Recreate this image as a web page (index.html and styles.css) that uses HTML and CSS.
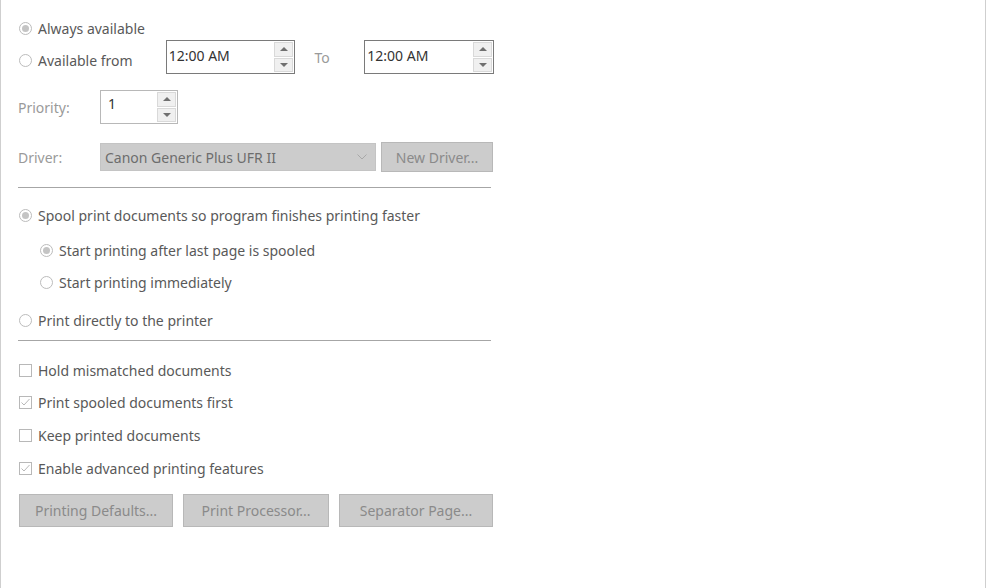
FILE: index.html
```html
<!DOCTYPE html>
<html>
<head>
<meta charset="utf-8">
<link rel="stylesheet" href="styles.css">
</head>
<body>
<div class="panel">
  <div class="content">
    <div class="row r-always">
      <span class="radio checked"></span><span class="label">Always available</span>
    </div>
    <div class="row r-from">
      <span class="radio low"></span><span class="label from-label low">Available from</span>
      <div class="spin time">
        <span class="value">12:00 AM</span>
        <div class="arrows"><span class="arrow up"></span><span class="arrow down"></span></div>
      </div>
      <span class="dim to-label">To</span>
      <div class="spin time">
        <span class="value">12:00 AM</span>
        <div class="arrows"><span class="arrow up"></span><span class="arrow down"></span></div>
      </div>
    </div>
    <div class="row r-priority">
      <span class="dim field-label">Priority:</span>
      <div class="spin priority">
        <span class="value prio-value">1</span>
        <div class="arrows"><span class="arrow up"></span><span class="arrow down"></span></div>
      </div>
    </div>
    <div class="row r-driver">
      <span class="dim field-label">Driver:</span>
      <div class="select">
        <span class="select-text">Canon Generic Plus UFR II</span>
        <svg class="chev" width="10" height="6" viewBox="0 0 10 6"><path d="M0.5 0.5 L5 5 L9.5 0.5" fill="none" stroke="#a8a8a8" stroke-width="1"/></svg>
      </div>
      <div class="btn new-driver">New Driver...</div>
    </div>
    <div class="rule rule-1"></div>
    <div class="row r-spool">
      <span class="radio checked"></span><span class="label">Spool print documents so program finishes printing faster</span>
    </div>
    <div class="row sub r-sub1">
      <span class="radio checked"></span><span class="label">Start printing after last page is spooled</span>
    </div>
    <div class="row sub r-sub2">
      <span class="radio"></span><span class="label">Start printing immediately</span>
    </div>
    <div class="row r-direct">
      <span class="radio"></span><span class="label">Print directly to the printer</span>
    </div>
    <div class="rule rule-2"></div>
    <div class="row r-cb1">
      <span class="check"></span><span class="label">Hold mismatched documents</span>
    </div>
    <div class="row r-cb2">
      <span class="check"><svg width="11" height="11" viewBox="0 0 11 11"><path d="M1.5 5.5 L4 8 L9.5 2" fill="none" stroke="#b8b8b8" stroke-width="1"/></svg></span><span class="label">Print spooled documents first</span>
    </div>
    <div class="row r-cb3">
      <span class="check"></span><span class="label">Keep printed documents</span>
    </div>
    <div class="row r-cb4">
      <span class="check"><svg width="11" height="11" viewBox="0 0 11 11"><path d="M1.5 5.5 L4 8 L9.5 2" fill="none" stroke="#b8b8b8" stroke-width="1"/></svg></span><span class="label">Enable advanced printing features</span>
    </div>
    <div class="buttons">
      <div class="btn b-defaults">Printing Defaults...</div>
      <div class="btn b-proc">Print Processor...</div>
      <div class="btn b-sep">Separator Page...</div>
    </div>
  </div>
</div>
</body>
</html>
```
FILE: styles.css
```css
html, body {
  margin: 0;
  padding: 0;
  background: #ffffff;
}
body {
  font-family: "Noto Sans", "Open Sans", sans-serif;
  font-size: 14px;
  color: #595959;
}
.panel {
  box-sizing: border-box;
  width: 986px;
  height: 588px;
  border-left: 1px solid #cfcfcf;
  border-right: 1px solid #cfcfcf;
  padding: 18px 0 0 17px;
}
.content {
  width: 476px;
  display: flex;
  flex-direction: column;
}
.row {
  display: flex;
  align-items: center;
  height: 20px;
}
.sub { padding-left: 21px; }
.radio {
  box-sizing: border-box;
  width: 13px;
  height: 13px;
  border: 1px solid #bcbcbc;
  border-radius: 50%;
  margin-left: 1px;
  margin-right: 6px;
  flex: none;
  display: flex;
  align-items: center;
  justify-content: center;
}
.radio.checked::after {
  content: "";
  width: 7px;
  height: 7px;
  border-radius: 50%;
  background: #c4c4c4;
}
.check {
  box-sizing: border-box;
  width: 13px;
  height: 13px;
  border: 1px solid #b8b8b8;
  margin-left: 1px;
  margin-right: 6px;
  flex: none;
  display: flex;
  align-items: center;
  justify-content: center;
}
.check svg { display: block; }
.label { white-space: nowrap; }
.low { margin-top: 6px; }
.dim { color: #9a9a9a; }
.r-from { height: 34px; margin-top: 2px; }
.from-label { width: 128px; }
.to-label { width: 50px; margin-left: 19px; }
.field-label { width: 82px; }
.spin {
  box-sizing: border-box;
  display: flex;
  align-items: stretch;
  justify-content: space-between;
  height: 34px;
  background: #fff;
  padding: 1px;
}
.time {
  width: 130px;
  border: 1px solid #7a7a7a;
}
.priority {
  width: 78px;
  border: 1px solid #b8b8b8;
}
.value {
  color: #333333;
  padding-left: 1px;
  align-self: center;
  margin-top: -3px;
}
.prio-value {
  align-self: flex-start;
  margin-top: 2px;
  padding-left: 6px;
}
.arrows {
  display: flex;
  flex-direction: column;
  gap: 1px;
  width: 19px;
}
.arrow {
  flex: 1;
  box-sizing: border-box;
  background: #f0f0f0;
  border: 1px solid #d9d9d9;
  position: relative;
}
.arrow.up::after, .arrow.down::after {
  content: "";
  position: absolute;
  left: 50%;
  top: 50%;
  margin-left: -4px;
  width: 0;
  height: 0;
  border-left: 4px solid transparent;
  border-right: 4px solid transparent;
}
.arrow.up::after {
  margin-top: -2px;
  border-bottom: 4px solid #707070;
}
.arrow.down::after {
  margin-top: -2px;
  border-top: 4px solid #707070;
}
.r-priority { height: 34px; margin-top: 16px; }
.r-driver { height: 30px; margin-top: 18px; }
.select {
  box-sizing: border-box;
  width: 276px;
  height: 28px;
  background: #cccccc;
  border: 1px solid #c4c4c4;
  display: flex;
  align-items: center;
  justify-content: space-between;
  padding: 0 8px 0 4px;
  color: #6d6d6d;
}
.btn {
  box-sizing: border-box;
  height: 30px;
  background: #cccccc;
  border: 1px solid #b8b8b8;
  color: #8a8a8a;
  display: flex;
  align-items: center;
  justify-content: center;
  white-space: nowrap;
}
.new-driver { width: 112px; margin-left: 5px; }
.rule {
  height: 1px;
  background: #a6a6a6;
  width: 473px;
}
.rule-1 { margin-top: 15px; }
.r-spool { margin-top: 17px; }
.r-sub1 { margin-top: 15px; }
.r-sub2 { margin-top: 12px; }
.r-direct { margin-top: 18px; }
.rule-2 { margin-top: 10px; }
.r-cb1 { margin-top: 19px; }
.r-cb2 { margin-top: 12px; }
.r-cb3 { margin-top: 13px; }
.r-cb4 { margin-top: 13px; }
.buttons {
  display: flex;
  gap: 10px;
  margin-top: 16px;
  padding-left: 1px;
}
.buttons .btn { height: 33px; }
.b-defaults { width: 154px; }
.b-proc { width: 146px; }
.b-sep { width: 154px; }
```
